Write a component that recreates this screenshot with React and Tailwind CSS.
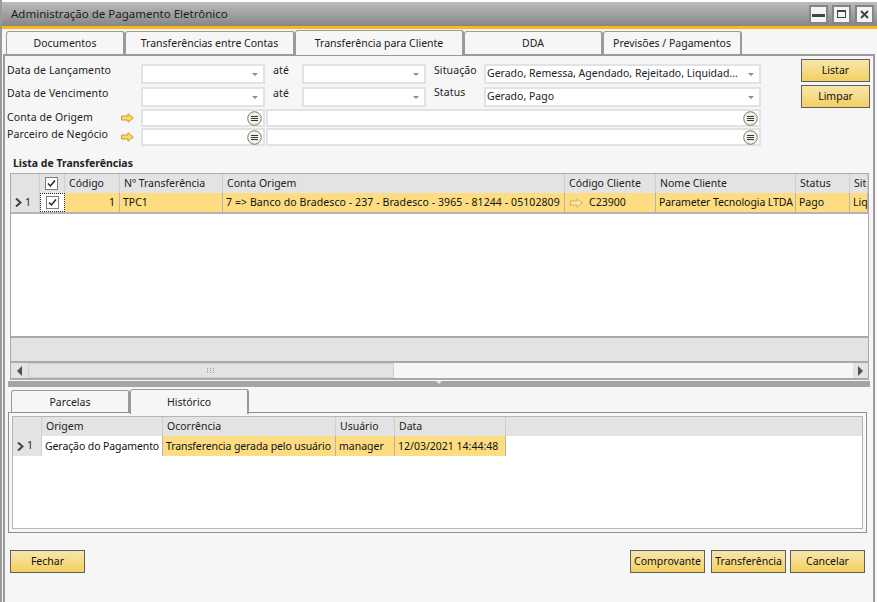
import React from "react";

const Arrow = ({ muted }) => (
  <svg width="13" height="10" viewBox="0 0 13 10" className="shrink-0">
    <path d="M0.5 3H7V0.7L12.3 5L7 9.3V7H0.5Z" fill={muted ? "#fbe9a8" : "#f8dc5c"} stroke={muted ? "#c9b25c" : "#bfa33a"} strokeWidth="1" />
  </svg>
);

const ListBtn = () => (
  <svg width="15" height="15" viewBox="0 0 15 15" className="shrink-0">
    <circle cx="7.5" cy="7.5" r="6.8" fill="#f3f0dc" stroke="#77776c" />
    <path d="M4 5.5H11M4 7.5H11M4 9.5H11" stroke="#1f3a66" strokeWidth="1.1" />
  </svg>
);

const Caret = () => <span className="w-0 h-0 border-x-[3px] border-x-transparent border-t-[3px] border-t-[#8d8d8d] shrink-0 mr-[2px]" />;

const Combo = ({ w, text }) => (
  <div className={`${w} h-[20px] bg-white border-2 border-[#e0e3e6] flex items-center pl-[1px] pr-[3px] justify-between shrink-0`}>
    <span className="truncate text-[10.5px] text-[#222]">{text}</span>
    <Caret />
  </div>
);

const Picker = ({ w }) => (
  <div className={`${w} h-[18px] bg-white border-2 border-[#e0e3e6] flex items-center justify-end pr-[1px] shrink-0`}>
    <ListBtn />
  </div>
);

const Check = () => (
  <span className="w-[13px] h-[13px] bg-white border border-[#7d7d7d] flex items-center justify-center shrink-0">
    <svg width="9" height="9" viewBox="0 0 9 9"><path d="M1 4.5L3.4 7L8 1.5" fill="none" stroke="#222" strokeWidth="1.5" /></svg>
  </span>
);

const Gold = ({ w, children }) => (
  <button className={`${w} h-[23px] pt-[1px] border border-[#5f5f5f] bg-gradient-to-b from-[#f7e6ac] to-[#f4cf5d] text-[10.5px] text-[#111] flex items-center justify-center shrink-0 whitespace-nowrap`}>
    {children}
  </button>
);

const Tab = ({ w, active, children }) => (
  <div className={`${w} ${active ? "h-[25px] -mb-[1px] bg-[#f6f6f6] border-b-0 z-10 self-end" : "h-[23px] bg-[#f6f6f6] border-b-0"} pt-[1px] border border-r-2 border-[#9a9a9a] rounded-t-[3px] flex items-center justify-center text-[10.5px] text-[#222] shrink-0`}>
    {children}
  </div>
);

const Hd = ({ w, children }) => (
  <div className={`${w} h-full bg-[#e3e3e3] border-r border-[#cfcfcf] flex items-center pl-[4px] text-[10.5px] text-[#222] whitespace-nowrap overflow-hidden shrink-0`}>{children}</div>
);

const Cell = ({ w, white, right, children }) => (
  <div className={`${w} h-full pt-[1px] ${white ? "bg-white" : "bg-[#fedd82]"} border-r border-[#b4b4b4] flex items-center ${right ? "justify-end pr-[4px]" : "pl-[3px]"} text-[10.5px] text-[#111] whitespace-nowrap overflow-hidden shrink-0`}>{children}</div>
);

const RowHead = () => (
  <div className="w-[29px] h-full bg-[#e3e3e3] border-r border-[#cfcfcf] flex items-center pl-[4px] gap-[3px] text-[10.5px] text-[#222] shrink-0">
    <svg width="7" height="9" viewBox="0 0 7 9"><path d="M1 0.5L5.5 4.5L1 8.5" fill="none" stroke="#444" strokeWidth="2" /></svg>
    1
  </div>
);

const FormLabel = ({ w, children }) => <span className={`${w} text-[10.5px] text-[#222] shrink-0 whitespace-nowrap tracking-[0.1px]`}>{children}</span>;

export default function App() {
  return (
    <div className="w-[877px] h-[602px] bg-[#f6f6f6] flex flex-col overflow-hidden font-['Noto_Sans',sans-serif] border-l-[2px] border-[#9b9b9b]">
      <div className="h-[2px] bg-white shrink-0" />
      <div className="h-[24px] shrink-0 bg-gradient-to-b from-[#bcbcbc] to-[#868686] flex items-center justify-between pl-[9px] pr-[3px]">
        <span className="text-[11.5px] text-[#1c1c1c]">Administração de Pagamento Eletrônico</span>
        <div className="flex gap-[4px]">
          <div className="w-[19px] h-[19px] bg-[#f4f4f4] border-2 border-[#858585] flex items-center justify-center"><span className="w-[13px] h-[3px] bg-[#444] mt-[3px]" /></div>
          <div className="w-[19px] h-[19px] bg-[#f4f4f4] border-2 border-[#858585] flex items-center justify-center"><span className="w-[9px] h-[8px] border border-[#444] border-t-[2px]" /></div>
          <div className="w-[19px] h-[19px] bg-[#f4f4f4] border-2 border-[#858585] flex items-center justify-center">
            <svg width="9" height="9" viewBox="0 0 9 9"><path d="M1 1L8 8M8 1L1 8" stroke="#444" strokeWidth="2" /></svg>
          </div>
        </div>
      </div>
      <div className="h-[3px] bg-[#fdb913] shrink-0" />

      <div className="h-[25px] flex items-end pl-[4px] shrink-0">
        <Tab w="w-[119px]">Documentos</Tab>
        <Tab w="w-[170px]">Transferências entre Contas</Tab>
        <Tab w="w-[169px]" active>Transferência para Cliente</Tab>
        <Tab w="w-[139px]">DDA</Tab>
        <Tab w="w-[139px]">Previsões / Pagamentos</Tab>
      </div>

      <div className="flex-1 min-h-0 ml-[1px] mr-[2px] border-x-2 border-t-2 border-[#9a9a9a] flex flex-col">
        <div className="flex h-[99px] shrink-0 pl-[2px]">
          <div className="w-[758px] pt-[8px] flex flex-col shrink-0">
            <div className="flex items-center h-[20px]">
              <FormLabel w="w-[134px] pb-[6px]">Data de Lançamento</FormLabel>
              <Combo w="w-[124px]" />
              <FormLabel w="w-[37px] pl-[8px] pb-[6px]">até</FormLabel>
              <Combo w="w-[124px]" />
              <FormLabel w="w-[58px] pl-[8px] pb-[6px]">Situação</FormLabel>
              <Combo w="w-[277px]" text="Gerado, Remessa, Agendado, Rejeitado, Liquidad..." />
            </div>
            <div className="flex items-center h-[20px] mt-[3px]">
              <FormLabel w="w-[134px] pb-[6px]">Data de Vencimento</FormLabel>
              <Combo w="w-[124px]" />
              <FormLabel w="w-[37px] pl-[8px] pb-[6px]">até</FormLabel>
              <Combo w="w-[124px]" />
              <FormLabel w="w-[58px] pl-[8px] pb-[8px]">Status</FormLabel>
              <Combo w="w-[277px]" text="Gerado, Pago" />
            </div>
            <div className="flex items-center h-[18px] mt-[2px]">
              <FormLabel w="w-[114px]">Conta de Origem</FormLabel>
              <span className="w-[20px]"><Arrow /></span>
              <Picker w="w-[124px]" />
              <span className="w-[1px]" />
              <Picker w="w-[495px]" />
            </div>
            <div className="flex items-center h-[18px] mt-[1px]">
              <FormLabel w="w-[114px] pb-[4px]">Parceiro de Negócio</FormLabel>
              <span className="w-[20px]"><Arrow /></span>
              <Picker w="w-[124px]" />
              <span className="w-[1px]" />
              <Picker w="w-[495px]" />
            </div>
          </div>
          <div className="ml-[36px] pt-[3px] flex flex-col gap-[3px]">
            <Gold w="w-[69px]">Listar</Gold>
            <Gold w="w-[69px]">Limpar</Gold>
          </div>
        </div>

        <div className="h-[18px] shrink-0 pl-[8px] flex items-center text-[10.5px] font-bold text-[#222]">Lista de Transferências</div>

        <div className="ml-[5px] w-[859px] h-[207px] shrink-0 border border-b-2 border-[#a9a9a9] bg-white flex flex-col">
          <div className="h-[19px] flex shrink-0 overflow-hidden">
            <Hd w="w-[29px]" />
            <Hd w="w-[25px] !pl-[5px]"><Check /></Hd>
            <Hd w="w-[55px] pt-[1px]">Código</Hd>
            <Hd w="w-[103px] pt-[1px]">Nº Transferência</Hd>
            <Hd w="w-[342px] pt-[1px]">Conta Origem</Hd>
            <Hd w="w-[91px] pt-[1px]">Código Cliente</Hd>
            <Hd w="w-[140px] pt-[1px]">Nome Cliente</Hd>
            <Hd w="w-[54px] pt-[1px]">Status</Hd>
            <Hd w="w-[18px] pt-[1px]">Situação</Hd>
          </div>
          <div className="h-[21px] flex shrink-0 overflow-hidden border-b-2 border-[#b4b4b4]">
            <RowHead />
            <div className="w-[25px] h-full bg-white border border-dotted border-[#222] flex items-center justify-center shrink-0"><Check /></div>
            <Cell w="w-[55px]" right>1</Cell>
            <Cell w="w-[103px]">TPC1</Cell>
            <Cell w="w-[342px] tracking-[0.09px]">7 =&gt; Banco do Bradesco - 237 - Bradesco - 3965 - 81244 - 05102809</Cell>
            <Cell w="w-[91px] gap-[6px] !pl-[5px]"><Arrow muted /> C23900</Cell>
            <Cell w="w-[140px] tracking-[-0.08px]">Parameter Tecnologia LTDA</Cell>
            <Cell w="w-[54px]">Pago</Cell>
            <Cell w="w-[18px]">Liquidado</Cell>
          </div>
          <div className="flex-1 bg-white" />
          <div className="h-[27px] shrink-0 bg-[#e3e3e3] border-y-2 border-[#a9a9a9]" />
          <div className="h-[15px] shrink-0 flex bg-[#f6f6f6]">
            <div className="w-[17px] bg-[#e3e3e3] flex items-center justify-center shrink-0">
              <span className="w-0 h-0 border-y-[5px] border-y-transparent border-r-[5px] border-r-[#47525c]" />
            </div>
            <div className="w-[366px] bg-[#e3e3e3] border border-[#cfcfcf] flex items-center justify-center shrink-0">
              <svg width="8" height="6" viewBox="0 0 8 6"><path d="M0 0h1v1H0zM3 0h1v1H3zM6 0h1v1H6zM0 2h1v1H0zM3 2h1v1H3zM6 2h1v1H6zM0 4h1v1H0zM3 4h1v1H3zM6 4h1v1H6z" fill="#9a9a9a" /></svg>
            </div>
            <div className="flex-1" />
            <div className="w-[15px] bg-[#e3e3e3] flex items-center justify-center shrink-0">
              <span className="w-0 h-0 border-y-[5px] border-y-transparent border-l-[5px] border-l-[#47525c]" />
            </div>
          </div>
        </div>

        <div className="ml-[3px] w-[862px] h-[6px] mt-[1px] shrink-0 bg-[#a5a5a5] flex justify-center">
          <span className="w-0 h-0 border-x-[3px] border-x-transparent border-t-[3px] border-t-[#dfe6ee]" />
        </div>

        <div className="h-[25px] mt-[1px] flex items-end pl-[6px] shrink-0">
          <Tab w="w-[119px]">Parcelas</Tab>
          <Tab w="w-[119px]" active>Histórico</Tab>
        </div>

        <div className="ml-[3px] w-[859px] h-[121px] shrink-0 border border-[#8f8f8f] p-[3px] -mt-[1px]">
          <div className="h-full border border-[#b5b5b5] bg-white flex flex-col">
            <div className="h-[19px] flex shrink-0">
              <Hd w="w-[29px]" />
              <Hd w="w-[121px]">Origem</Hd>
              <Hd w="w-[173px]">Ocorrência</Hd>
              <Hd w="w-[59px]">Usuário</Hd>
              <Hd w="w-[111px]">Data</Hd>
              <div className="flex-1 bg-[#e3e3e3]" />
            </div>
            <div className="h-[20px] flex shrink-0">
              <RowHead />
              <Cell w="w-[121px] tracking-[-0.1px]" white>Geração do Pagamento</Cell>
              <Cell w="w-[173px] tracking-[-0.1px]">Transferencia gerada pelo usuário</Cell>
              <Cell w="w-[59px]">manager</Cell>
              <Cell w="w-[111px]">12/03/2021 14:44:48</Cell>
            </div>
          </div>
        </div>

        <div className="flex mt-[17px] pl-[5px] pr-[6px]">
          <Gold w="w-[75px]">Fechar</Gold>
          <div className="ml-auto flex mr-[2px]">
            <Gold w="w-[75px]">Comprovante</Gold>
            <span className="w-[6px]" />
            <Gold w="w-[75px]">Transferência</Gold>
            <span className="w-[4px]" />
            <Gold w="w-[75px]">Cancelar</Gold>
          </div>
        </div>
      </div>
    </div>
  );
}
